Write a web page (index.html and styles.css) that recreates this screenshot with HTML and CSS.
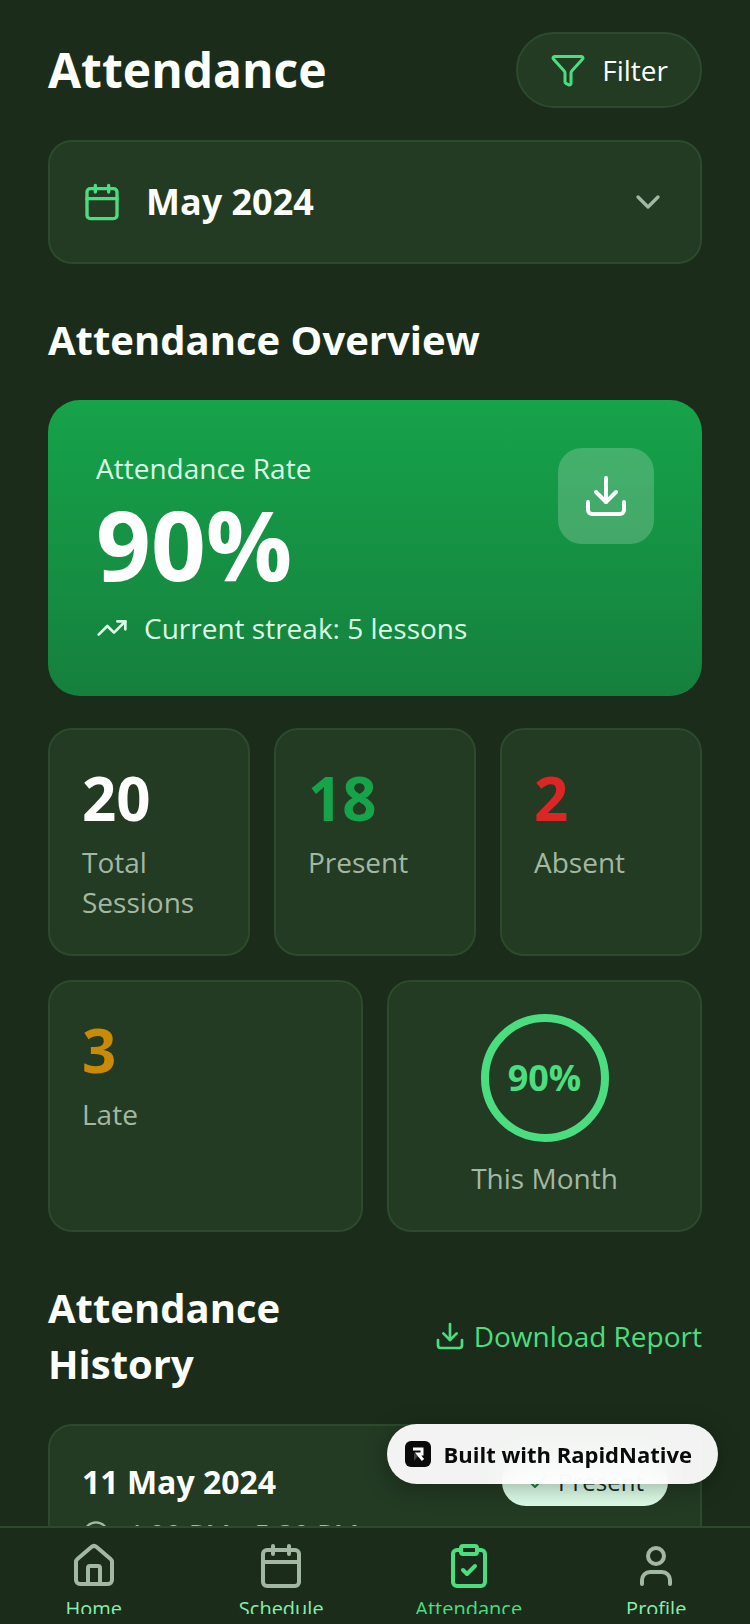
FILE: index.html
```html
<!DOCTYPE html>
<html lang="en">
<head>
  <meta charset="UTF-8">
  <meta name="viewport" content="width=device-width, initial-scale=1.0">
  <title>Attendance</title>
  <link rel="stylesheet" href="styles.css">
</head>
<body>
  <div class="app">
    <main class="content">
      <header class="header">
        <h1>Attendance</h1>
        <button type="button" class="filter-btn">
          <svg class="icon icon-36 green" viewBox="0 0 24 24"><path d="M10 20a1 1 0 0 0 .553.895l2 1A1 1 0 0 0 14 21v-7a2 2 0 0 1 .517-1.341L21.74 4.67A1 1 0 0 0 21 3H3a1 1 0 0 0-.742 1.67l7.225 7.989A2 2 0 0 1 10 14z"/></svg>
          Filter
        </button>
      </header>

      <button type="button" class="card month-btn">
        <svg class="icon icon-40 green" viewBox="0 0 24 24"><path d="M8 2v4M16 2v4M3 10h18"/><rect x="3" y="4" width="18" height="18" rx="2"/></svg>
        <span class="month">May 2024</span>
        <svg class="icon icon-40 muted" viewBox="0 0 24 24"><path d="m6 9 6 6 6-6"/></svg>
      </button>

      <section class="overview">
        <h2>Attendance Overview</h2>

        <div class="rate-card">
          <div>
            <p class="rate-label">Attendance Rate</p>
            <p class="rate-value">90%</p>
            <p class="streak">
              <svg class="icon icon-32" viewBox="0 0 24 24"><path d="M16 7h6v6"/><path d="m22 7-8.5 8.5-5-5L2 17"/></svg>
              Current streak: 5 lessons
            </p>
          </div>
          <button type="button" class="download-btn" aria-label="Download">
            <svg class="icon icon-48" viewBox="0 0 24 24"><path d="M12 15V3"/><path d="M21 15v4a2 2 0 0 1-2 2H5a2 2 0 0 1-2-2v-4"/><path d="m7 10 5 5 5-5"/></svg>
          </button>
        </div>

        <div class="stats stats-3">
          <div class="card">
            <p class="stat-value">20</p>
            <p class="stat-label">Total Sessions</p>
          </div>
          <div class="card">
            <p class="stat-value present">18</p>
            <p class="stat-label">Present</p>
          </div>
          <div class="card">
            <p class="stat-value absent">2</p>
            <p class="stat-label">Absent</p>
          </div>
        </div>

        <div class="stats stats-2">
          <div class="card">
            <p class="stat-value late">3</p>
            <p class="stat-label">Late</p>
          </div>
          <div class="card month-card">
            <div class="ring">90%</div>
            <p class="ring-label">This Month</p>
          </div>
        </div>
      </section>

      <section class="history">
        <div class="history-header">
          <h2>Attendance History</h2>
          <a href="#" class="report-link">
            <svg class="icon icon-32" viewBox="0 0 24 24"><path d="M12 15V3"/><path d="M21 15v4a2 2 0 0 1-2 2H5a2 2 0 0 1-2-2v-4"/><path d="m7 10 5 5 5-5"/></svg>
            Download Report
          </a>
        </div>

        <div class="card lesson">
          <div>
            <h3>11 May 2024</h3>
            <p class="lesson-time">
              <svg class="icon icon-28" viewBox="0 0 24 24"><circle cx="12" cy="12" r="10"/><path d="M12 6v6l4 2"/></svg>
              4:00 PM - 5:30 PM
            </p>
          </div>
          <span class="status">
            <svg class="icon icon-24" viewBox="0 0 24 24"><path d="M20 6 9 17l-5-5"/></svg>
            Present
          </span>
        </div>
      </section>
    </main>

    <nav class="tab-bar">
      <ul>
        <li>
          <a href="#">
            <svg class="icon icon-48 muted" viewBox="0 0 24 24"><path d="M15 21v-8a1 1 0 0 0-1-1h-4a1 1 0 0 0-1 1v8"/><path d="M3 10a2 2 0 0 1 .709-1.528l7-5.999a2 2 0 0 1 2.582 0l7 5.999A2 2 0 0 1 21 10v9a2 2 0 0 1-2 2H5a2 2 0 0 1-2-2z"/></svg>
            Home
          </a>
        </li>
        <li>
          <a href="#">
            <svg class="icon icon-48 muted" viewBox="0 0 24 24"><path d="M8 2v4M16 2v4M3 10h18"/><rect x="3" y="4" width="18" height="18" rx="2"/></svg>
            Schedule
          </a>
        </li>
        <li>
          <a href="#" class="active">
            <svg class="icon icon-48" viewBox="0 0 24 24"><rect x="8" y="2" width="8" height="4" rx="1"/><path d="M16 4h2a2 2 0 0 1 2 2v14a2 2 0 0 1-2 2H6a2 2 0 0 1-2-2V6a2 2 0 0 1 2-2h2"/><path d="m9 14 2 2 4-4"/></svg>
            Attendance
          </a>
        </li>
        <li>
          <a href="#">
            <svg class="icon icon-48 muted" viewBox="0 0 24 24"><path d="M19 21v-2a4 4 0 0 0-4-4H9a4 4 0 0 0-4 4v2"/><circle cx="12" cy="7" r="4"/></svg>
            Profile
          </a>
        </li>
      </ul>
    </nav>

    <a href="#" class="badge">
      <svg class="badge-logo" viewBox="0 0 26 26">
        <rect width="26" height="26" rx="6" fill="#0a0a0a"/>
        <path d="M9 12v8l4-5z" fill="#444"/>
        <path d="M8 8h9v5h-4l5 6" fill="none" stroke="#fff" stroke-width="3"/>
      </svg>
      Built with RapidNative
    </a>
  </div>
</body>
</html>
```

FILE: styles.css
```css
* {
  box-sizing: border-box;
}
body {
  margin: 0;
  background-color: #1b2d1a;
  color: #fcfffc;
  font-family: "Open Sans", sans-serif;
  font-size: 28px;
  line-height: 40px;
}
h1, h2, h3, p, ul {
  margin: 0;
  padding: 0;
}
button {
  font: inherit;
  color: inherit;
  cursor: pointer;
}
a {
  text-decoration: none;
}
h1 {
  font-size: 48px;
  line-height: 64px;
}
h2 {
  font-size: 40px;
  line-height: 56px;
}
h3 {
  font-size: 32px;
  line-height: 48px;
}

/* icons */
.icon {
  display: block;
  flex-shrink: 0;
  fill: none;
  stroke: currentColor;
  stroke-width: 2;
  stroke-linecap: round;
  stroke-linejoin: round;
}
.icon-24 {
  width: 24px;
  height: 24px;
}
.icon-28 {
  width: 28px;
  height: 28px;
}
.icon-32 {
  width: 32px;
  height: 32px;
}
.icon-36 {
  width: 36px;
  height: 36px;
}
.icon-40 {
  width: 40px;
  height: 40px;
}
.icon-48 {
  width: 48px;
  height: 48px;
}
.green {
  color: #4ade80;
}
.muted {
  color: #a3b8a3;
}

/* layout */
.app {
  display: flex;
  flex-direction: column;
  height: 100vh;
}
.content {
  flex: 1;
  min-height: 0;
  padding: 32px 48px;
  overflow-y: auto;
  scrollbar-width: none;
}
.header {
  display: flex;
  align-items: center;
  justify-content: space-between;
  margin-bottom: 32px;
}
.filter-btn {
  display: flex;
  align-items: center;
  gap: 16px;
  padding: 16px 32px;
  background-color: #233a23;
  border: 2px solid #2d4a2d;
  border-radius: 38px;
}
.card {
  padding: 32px;
  background-color: #233a23;
  border: 2px solid #2d4a2d;
  border-radius: 24px;
}
.month-btn {
  display: flex;
  align-items: center;
  gap: 24px;
  width: 100%;
}
.month {
  flex: 1;
  font-size: 36px;
  font-weight: 700;
  line-height: 56px;
  text-align: left;
}

/* overview */
.overview {
  margin-top: 48px;
}
.rate-card {
  display: flex;
  align-items: flex-start;
  justify-content: space-between;
  margin: 32px 0;
  padding: 48px;
  background: linear-gradient(#16a34a, #15803d);
  border-radius: 32px;
  color: #dcfce7;
}
.rate-value {
  margin: 8px 0 16px;
  color: #fff;
  font-size: 96px;
  font-weight: 700;
  line-height: 96px;
}
.streak {
  display: flex;
  align-items: center;
  gap: 16px;
}
.download-btn {
  padding: 24px;
  background-color: rgba(255, 255, 255, 0.2);
  border: none;
  border-radius: 24px;
  color: #fff;
}
.stats {
  display: grid;
  gap: 24px;
  margin-bottom: 24px;
}
.stats-3 {
  grid-template-columns: repeat(3, 1fr);
}
.stats-2 {
  grid-template-columns: repeat(2, 1fr);
}
.stat-value {
  margin-bottom: 8px;
  font-size: 60px;
  font-weight: 700;
  line-height: 72px;
}
.stat-label, .ring-label {
  color: #a3b8a3;
}
.present {
  color: #16a34a;
}
.absent {
  color: #dc2626;
}
.late {
  color: #ca8a04;
}
.month-card {
  display: flex;
  flex-direction: column;
  align-items: center;
  gap: 16px;
}
.ring {
  display: flex;
  align-items: center;
  justify-content: center;
  width: 128px;
  height: 128px;
  border: 8px solid #4ade80;
  border-radius: 50%;
  color: #4ade80;
  font-size: 36px;
  font-weight: 700;
}

/* history */
.history {
  margin-top: 48px;
}
.history-header {
  display: flex;
  align-items: center;
  justify-content: space-between;
  gap: 24px;
  margin-bottom: 32px;
}
.report-link {
  display: flex;
  align-items: center;
  gap: 8px;
  color: #4ade80;
  white-space: nowrap;
}
.lesson {
  display: flex;
  align-items: flex-start;
  justify-content: space-between;
}
.lesson-time {
  display: flex;
  align-items: center;
  gap: 16px;
  margin-top: 8px;
  color: #a3b8a3;
}
.status {
  display: flex;
  align-items: center;
  gap: 8px;
  padding: 8px 24px;
  background-color: #dcfce7;
  border-radius: 24px;
  color: #14291a;
  font-size: 24px;
  line-height: 32px;
}
.status .icon {
  color: #15803d;
}

/* bottom navigation */
.tab-bar {
  padding: 14px 0 10px;
  border-top: 2px solid #2d4a2d;
}
.tab-bar ul {
  display: grid;
  grid-template-columns: repeat(4, 1fr);
  height: 72px;
  overflow: hidden;
  list-style: none;
}
.tab-bar a {
  display: flex;
  flex-direction: column;
  align-items: center;
  gap: 4px;
  color: #86efac;
  font-size: 20px;
  line-height: 30px;
}
.tab-bar .active {
  color: #4ade80;
}

.badge {
  position: fixed;
  right: 32px;
  bottom: 140px;
  display: flex;
  align-items: center;
  gap: 12px;
  padding: 15px 26px 15px 18px;
  background-color: rgba(255, 255, 255, 0.94);
  border-radius: 30px;
  box-shadow: 0 4px 24px rgba(0, 0, 0, 0.3);
  backdrop-filter: blur(16px);
  color: #0a0a0a;
  font-size: 22px;
  font-weight: 700;
  line-height: 30px;
}
.badge-logo {
  width: 26px;
  height: 26px;
}
```
